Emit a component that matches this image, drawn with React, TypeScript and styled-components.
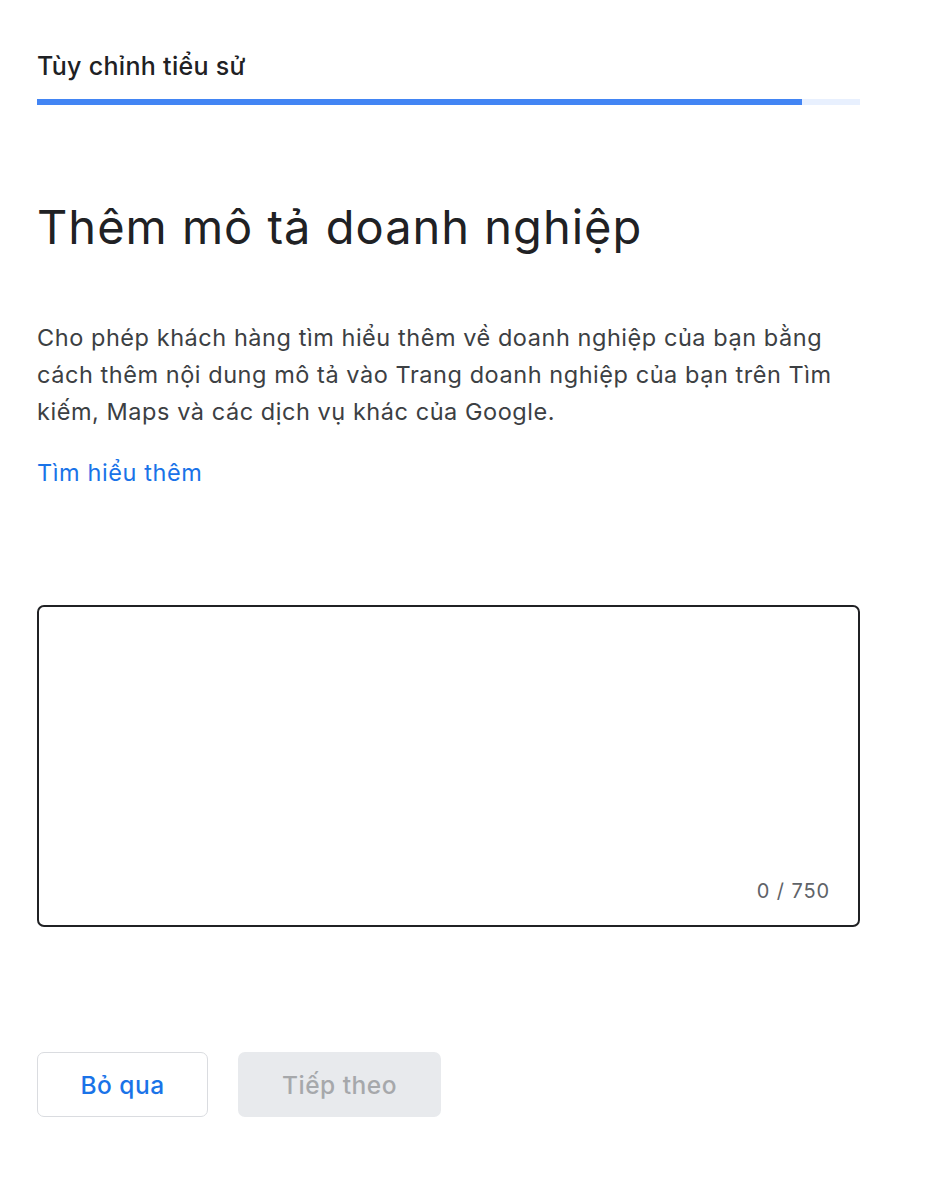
import React, { useState } from "react";
import styled, { createGlobalStyle } from "styled-components";

const Color = {
  text: "#202124",
  body: "#3c4043",
  blue: "#1a73e8",
  bar: "#4285f4",
  barTrack: "#e8f0fe",
  grey: "#5f6368",
  border: "#dadce0",
  disabledBg: "#e8eaed",
  disabledText: "#a6a8ab",
};

const GlobalStyle = createGlobalStyle`
  body {
    margin: 0;
    background: #fff;
    font-family: Inter, Roboto, "Noto Sans", "Liberation Sans", sans-serif;
    color: ${Color.text};
  }
`;

const MAX = 750;

const App = () => {
  const [text, setText] = useState("");
  const progress = 93;

  return (
    <>
      <GlobalStyle />
      <Page>
        <StepTitle>Tùy chỉnh tiểu sử</StepTitle>
        <Track>
          <Fill style={{ width: `${progress}%` }} />
        </Track>
        <Heading>Thêm mô tả doanh nghiệp</Heading>
        <Description>
          Cho phép khách hàng tìm hiểu thêm về doanh nghiệp của bạn bằng cách
          thêm nội dung mô tả vào Trang doanh nghiệp của bạn trên Tìm kiếm,
          Maps và các dịch vụ khác của Google.
        </Description>
        <LearnMore href="#">Tìm hiểu thêm</LearnMore>
        <Field>
          <TextArea
            value={text}
            maxLength={MAX}
            onChange={(e) => setText(e.target.value)}
          />
          <Counter>
            {text.length} / {MAX}
          </Counter>
        </Field>
        <Actions>
          <SkipButton>Bỏ qua</SkipButton>
          <NextButton disabled>Tiếp theo</NextButton>
        </Actions>
      </Page>
    </>
  );
};

const Page = styled.div`
  display: flex;
  flex-direction: column;
  width: 823px;
  padding: 50px 0 0 37px;
`;

const StepTitle = styled.div`
  font-size: 25px;
  font-weight: 500;
  line-height: 32px;
  letter-spacing: 0.3px;
  color: ${Color.text};
`;

const Track = styled.div`
  height: 6px;
  margin-top: 17px;
  background-color: ${Color.barTrack};
`;

const Fill = styled.div`
  height: 100%;
  background-color: ${Color.bar};
`;

const Heading = styled.h1`
  margin: 92px 0 0;
  font-size: 47px;
  font-weight: 400;
  line-height: 60px;
  letter-spacing: 1px;
  color: ${Color.text};
`;

const Description = styled.p`
  margin: 62px 0 0;
  font-size: 23.5px;
  line-height: 37px;
  letter-spacing: 0.55px;
  color: ${Color.body};
`;

const LearnMore = styled.a`
  margin-top: 24px;
  align-self: flex-start;
  font-size: 23.5px;
  line-height: 37px;
  letter-spacing: 0.6px;
  color: ${Color.blue};
  text-decoration: none;
`;

const Field = styled.div`
  position: relative;
  margin-top: 114px;
  height: 322px;
  border: 2px solid ${Color.text};
  border-radius: 7px;
  box-sizing: border-box;
`;

const TextArea = styled.textarea`
  width: 100%;
  height: 100%;
  box-sizing: border-box;
  border: none;
  outline: none;
  resize: none;
  background: transparent;
  padding: 18px 24px 56px;
  font-family: inherit;
  font-size: 20px;
  color: ${Color.text};
`;

const Counter = styled.span`
  position: absolute;
  right: 28px;
  bottom: 22px;
  font-size: 20px;
  letter-spacing: 0.9px;
  color: ${Color.grey};
`;

const Actions = styled.div`
  display: flex;
  gap: 30px;
  margin-top: 125px;
`;

const Button = styled.button`
  height: 65px;
  border-radius: 7px;
  font-family: inherit;
  font-size: 24.5px;
  font-weight: 500;
  letter-spacing: 0.5px;
  cursor: pointer;
`;

const SkipButton = styled(Button)`
  width: 171px;
  background: #fff;
  border: 1.5px solid ${Color.border};
  color: ${Color.blue};
`;

const NextButton = styled(Button)`
  width: 203px;
  background: ${Color.disabledBg};
  border: none;
  color: ${Color.disabledText};
  cursor: default;
`;

export default App;
